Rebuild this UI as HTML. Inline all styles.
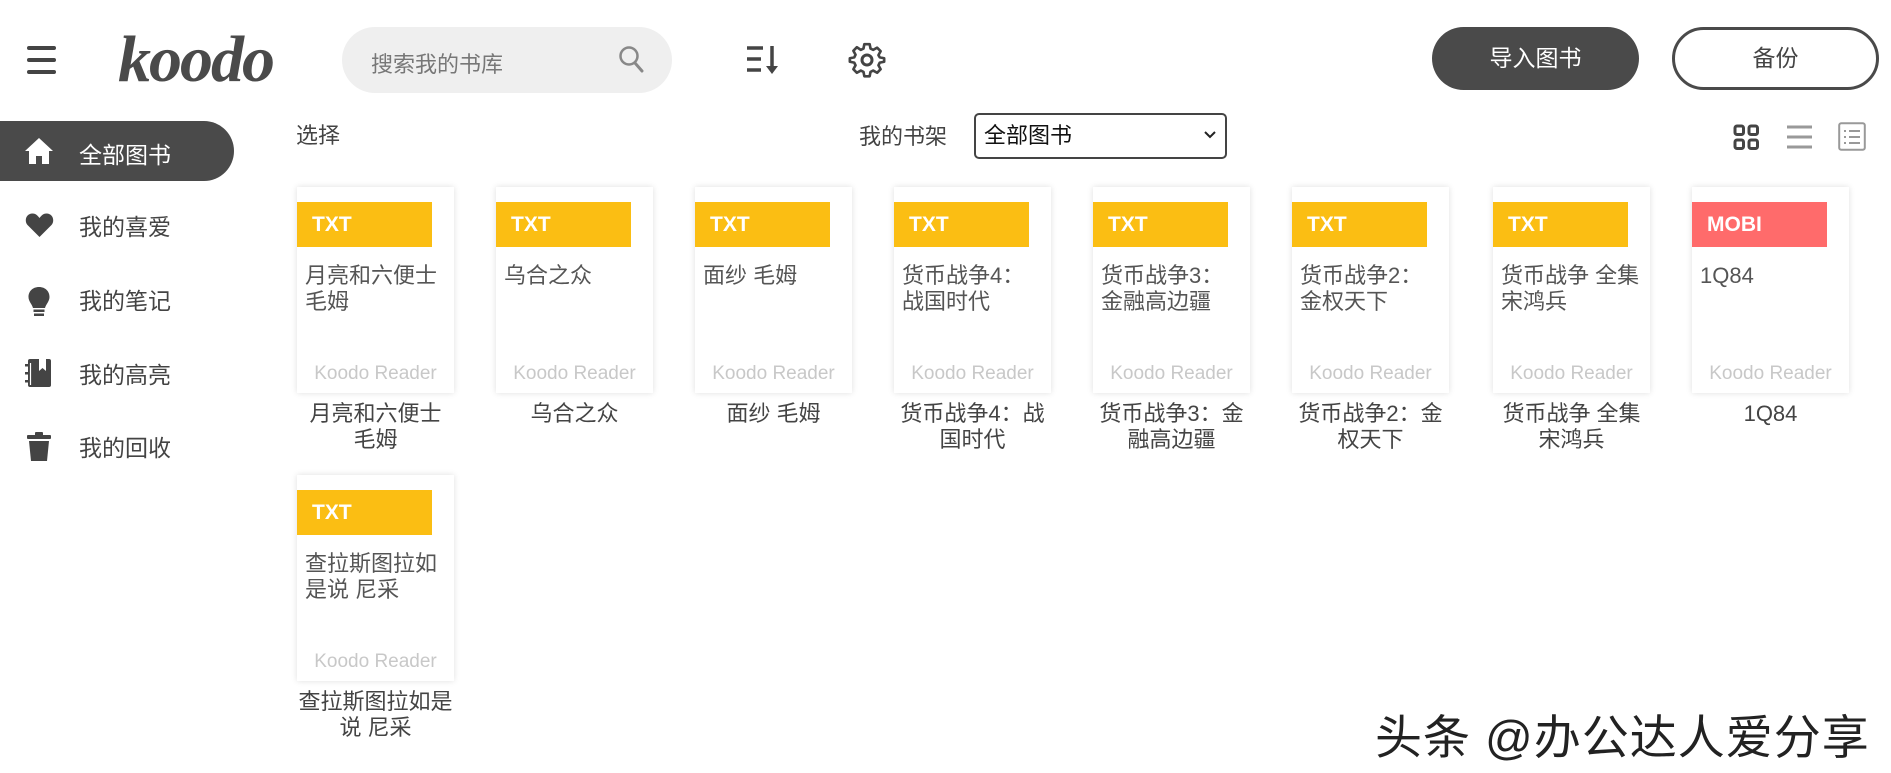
<!DOCTYPE html>
<html><head><meta charset="utf-8"><style>
*{margin:0;padding:0;box-sizing:border-box}
body{width:1891px;height:773px;background:#fff;position:relative;overflow:hidden;font-family:"Liberation Sans","Noto Sans CJK SC",sans-serif;color:#444}
.a{position:absolute}
.card{position:absolute;width:157px;height:206px;background:#fff;box-shadow:0 0 6px rgba(0,0,0,.13)}
.bar{position:absolute;left:0;top:15px;width:135px;height:45px;background:#fbbe13;color:#fff;font-weight:bold;font-size:21px;line-height:45px;padding-left:15px}
.ct{position:absolute;left:8px;top:76px;width:145px;font-size:22px;line-height:26px;color:#555}
.kr{position:absolute;left:0;width:157px;text-align:center;top:176px;font-size:19px;color:#c8c8c8}
.lb{position:absolute;width:157px;text-align:center;font-size:22px;line-height:26px;color:#444}
.nav{position:absolute;left:79px;font-size:23px;color:#444}
</style></head><body>
<div class="a" style="left:27px;top:46px;width:29px;height:4px;background:#444;border-radius:2px"></div>
<div class="a" style="left:27px;top:58px;width:29px;height:4px;background:#444;border-radius:2px"></div>
<div class="a" style="left:27px;top:70px;width:29px;height:4px;background:#444;border-radius:2px"></div>
<div class="a" style="left:118px;top:22px;font-family:'Liberation Serif',serif;font-style:italic;font-weight:bold;font-size:66px;color:#4a4a4a;letter-spacing:-2px">koodo</div>
<div class="a" style="left:342px;top:27px;width:330px;height:66px;border-radius:33px;background:#efefef"></div>
<div class="a" style="left:371px;top:47px;font-size:22px;color:#777">搜索我的书库</div>
<svg class="a" style="left:618px;top:45px" width="28" height="30" viewBox="0 0 28 30"><circle cx="11" cy="11" r="8.5" fill="none" stroke="#888" stroke-width="2.5"/><line x1="17" y1="18" x2="24" y2="26" stroke="#888" stroke-width="3" stroke-linecap="round"/></svg>
<svg class="a" style="left:745px;top:44px" width="36" height="32" viewBox="0 0 36 32"><g stroke="#444" stroke-width="3.5"><line x1="2" y1="4" x2="18" y2="4"/><line x1="2" y1="15" x2="16" y2="15"/><line x1="2" y1="26" x2="16" y2="26"/><line x1="27" y1="2" x2="27" y2="25"/></g><path d="M21 22 L27 30 L33 22Z" fill="#444"/></svg>
<svg class="a" style="left:847px;top:40px" width="40" height="40" viewBox="0 0 40 40"><path fill="none" stroke="#444" stroke-width="3" stroke-linejoin="round" d="M17 3h6l1 5 3 1.5 4.5-2.5 4 4-2.5 4.5L34.5 18l5 1v4l-5 1-1.5 3 2.5 4.5-4 4-4.5-2.5-3 1.5-1 5h-6l-1-5-3-1.5-4.5 2.5-4-4 2.5-4.5L5.5 24l-5-1v-4l5-1 1.5-3-2.5-4.5 4-4L13 9.5 16 8z" transform="translate(20 20) scale(0.88) translate(-20 -21)"/><circle cx="20" cy="20" r="5" fill="none" stroke="#444" stroke-width="3"/></svg>
<div class="a" style="left:1432px;top:27px;width:207px;height:63px;border-radius:32px;background:#4a4a4a;color:#fff;font-size:23px;text-align:center;line-height:63px">导入图书</div>
<div class="a" style="left:1672px;top:27px;width:207px;height:63px;border-radius:32px;border:3px solid #4a4a4a;color:#444;font-size:23px;text-align:center;line-height:57px">备份</div>
<div class="a" style="left:0;top:121px;width:234px;height:60px;border-radius:0 30px 30px 0;background:#4a4a4a"></div>
<svg class="a" style="left:24px;top:137px" width="30" height="28" viewBox="0 0 30 28"><path d="M15 1 L29 14 L25 14 L25 27 L18 27 L18 19 L12 19 L12 27 L5 27 L5 14 L1 14Z" fill="#fff"/></svg>
<div class="nav" style="top:136px;color:#fff">全部图书</div>
<svg class="a" style="left:25px;top:212px" width="29" height="26" viewBox="0 0 29 26"><path d="M14.5 25 L2.5 13 C-1 9 1 1.5 7.5 1.5 C11 1.5 13 4 14.5 6 C16 4 18 1.5 21.5 1.5 C28 1.5 30 9 26.5 13Z" fill="#444"/></svg>
<div class="nav" style="top:208px">我的喜爱</div>
<svg class="a" style="left:27px;top:286px" width="24" height="32" viewBox="0 0 24 32"><path d="M12 1C5.5 1 1.5 5.5 1.5 11c0 4.5 3.5 7 4.5 11h12c1-4 4.5-6.5 4.5-11C22.5 5.5 18.5 1 12 1z" fill="#444"/><rect x="6.5" y="23.5" width="11" height="2.5" fill="#444"/><rect x="7" y="27.5" width="10" height="2.5" fill="#444"/></svg>
<div class="nav" style="top:282px">我的笔记</div>
<svg class="a" style="left:25px;top:358px" width="28" height="30" viewBox="0 0 28 30"><rect x="3" y="1" width="23" height="28" rx="2" fill="#444"/><path d="M14 1 L14 13 L17.5 10 L21 13 L21 1Z" fill="#fff"/><rect x="0" y="6" width="5" height="2.5" fill="#444"/><rect x="0" y="14" width="5" height="2.5" fill="#444"/><rect x="0" y="22" width="5" height="2.5" fill="#444"/><line x1="5.5" y1="5" x2="5.5" y2="27" stroke="#fff" stroke-width="1.2"/></svg>
<div class="nav" style="top:356px">我的高亮</div>
<svg class="a" style="left:27px;top:432px" width="26" height="30" viewBox="0 0 26 30"><rect x="0" y="3" width="24" height="4" rx="1" fill="#444"/><rect x="8" y="0" width="8" height="4" rx="1" fill="#444"/><path d="M2 9 L22 9 L20 29 L4 29Z" fill="#444"/></svg>
<div class="nav" style="top:429px">我的回收</div>
<div class="a" style="left:296px;top:118px;font-size:22px;color:#444">选择</div>
<div class="a" style="left:859px;top:119px;font-size:22px;color:#444">我的书架</div>
<div class="a" style="left:974px;top:113px;width:253px;height:46px;border:2.5px solid #444;border-radius:5px;font-size:22px;color:#111;line-height:42px;padding-left:8px">全部图书
<svg style="position:absolute;right:8px;top:15px" width="14" height="10" viewBox="0 0 14 10"><path d="M2 2 L7 7 L12 2" fill="none" stroke="#222" stroke-width="2"/></svg></div>
<svg class="a" style="left:1733px;top:124px" width="27" height="27" viewBox="0 0 27 27"><g fill="none" stroke="#444" stroke-width="3"><rect x="2" y="2" width="8.5" height="8.5" rx="2"/><rect x="16" y="2" width="8.5" height="8.5" rx="2"/><rect x="2" y="16" width="8.5" height="8.5" rx="2"/><rect x="16" y="16" width="8.5" height="8.5" rx="2"/></g></svg>
<svg class="a" style="left:1786px;top:124px" width="27" height="26" viewBox="0 0 27 26"><g stroke="#999" stroke-width="3"><line x1="1" y1="3" x2="26" y2="3"/><line x1="1" y1="13" x2="26" y2="13"/><line x1="1" y1="23" x2="26" y2="23"/></g></svg>
<svg class="a" style="left:1838px;top:122px" width="28" height="29" viewBox="0 0 28 29"><rect x="1.2" y="1.2" width="25.6" height="26.6" rx="2" fill="none" stroke="#999" stroke-width="2"/><g stroke="#999" stroke-width="2"><line x1="6" y1="9" x2="8" y2="9"/><line x1="11" y1="9" x2="22" y2="9"/><line x1="6" y1="15" x2="8" y2="15"/><line x1="11" y1="15" x2="22" y2="15"/><line x1="6" y1="21" x2="8" y2="21"/><line x1="11" y1="21" x2="22" y2="21"/></g></svg>

<div class="card" style="left:297px;top:187px"><div class="bar">TXT</div><div class="ct">月亮和六便士<br>毛姆</div><div class="kr">Koodo Reader</div></div>
<div class="lb" style="left:297px;top:401px">月亮和六便士<br>毛姆</div>
<div class="card" style="left:496px;top:187px"><div class="bar">TXT</div><div class="ct">乌合之众</div><div class="kr">Koodo Reader</div></div>
<div class="lb" style="left:496px;top:401px">乌合之众</div>
<div class="card" style="left:695px;top:187px"><div class="bar">TXT</div><div class="ct">面纱 毛姆</div><div class="kr">Koodo Reader</div></div>
<div class="lb" style="left:695px;top:401px">面纱 毛姆</div>
<div class="card" style="left:894px;top:187px"><div class="bar">TXT</div><div class="ct">货币战争4：<br>战国时代</div><div class="kr">Koodo Reader</div></div>
<div class="lb" style="left:894px;top:401px">货币战争4：战<br>国时代</div>
<div class="card" style="left:1093px;top:187px"><div class="bar">TXT</div><div class="ct">货币战争3：<br>金融高边疆</div><div class="kr">Koodo Reader</div></div>
<div class="lb" style="left:1093px;top:401px">货币战争3：金<br>融高边疆</div>
<div class="card" style="left:1292px;top:187px"><div class="bar">TXT</div><div class="ct">货币战争2：<br>金权天下</div><div class="kr">Koodo Reader</div></div>
<div class="lb" style="left:1292px;top:401px">货币战争2：金<br>权天下</div>
<div class="card" style="left:1493px;top:187px"><div class="bar">TXT</div><div class="ct">货币战争 全集<br>宋鸿兵</div><div class="kr">Koodo Reader</div></div>
<div class="lb" style="left:1493px;top:401px">货币战争 全集<br>宋鸿兵</div>
<div class="card" style="left:1692px;top:187px"><div class="bar" style="background:#ff6b6b">MOBI</div><div class="ct">1Q84</div><div class="kr">Koodo Reader</div></div>
<div class="lb" style="left:1692px;top:401px">1Q84</div>
<div class="card" style="left:297px;top:475px"><div class="bar">TXT</div><div class="ct">查拉斯图拉如<br>是说 尼采</div><div class="kr">Koodo Reader</div></div>
<div class="lb" style="left:287px;width:177px;top:689px">查拉斯图拉如是<br>说 尼采</div>

<div class="a" style="left:1375px;top:699px;font-size:47px;color:#222;white-space:nowrap;letter-spacing:1px">头条 @办公达人爱分享</div>
</body></html>
